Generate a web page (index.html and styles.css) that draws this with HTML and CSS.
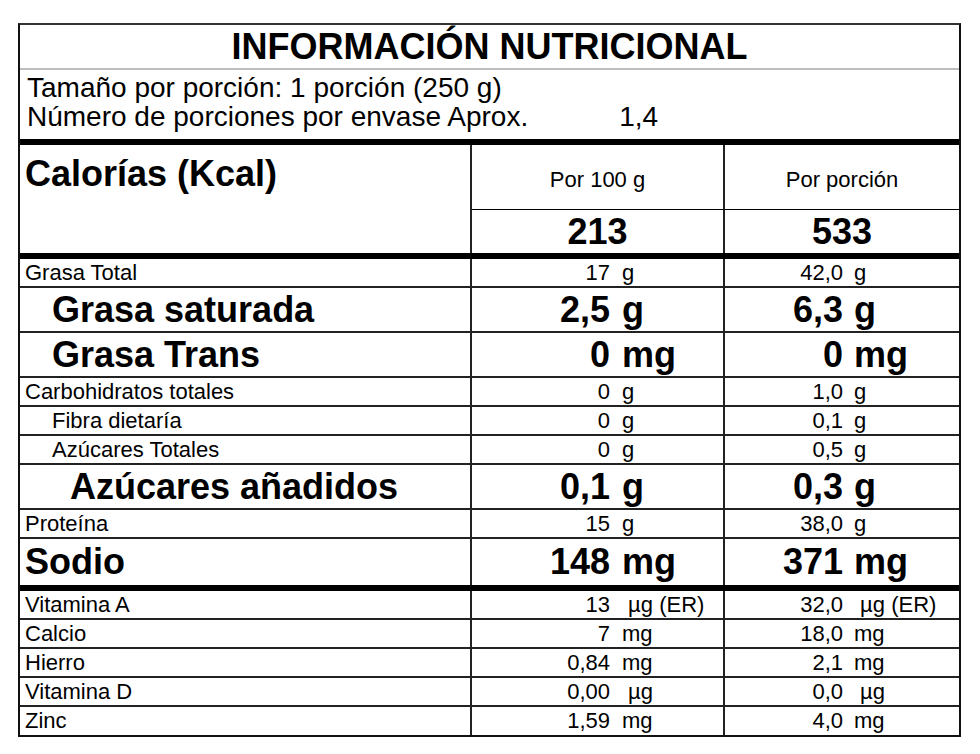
FILE: index.html
```html
<!DOCTYPE html>
<html lang="es">
<head>
<meta charset="utf-8">
<title>Información Nutricional</title>
<link rel="stylesheet" href="styles.css">
</head>
<body>
<div class="panel">
  <div class="title">INFORMACIÓN NUTRICIONAL</div>
  <div class="serving">
    <div>Tamaño por porción: 1 porción (250 g)</div>
    <div>Número de porciones por envase Aprox.<span class="count">1,4</span></div>
  </div>
  <div class="cal">
    <div class="cal-label">Calorías (Kcal)</div>
    <div class="cal-head c1">Por 100 g</div>
    <div class="cal-head">Por porción</div>
    <div class="cal-val c1">213</div>
    <div class="cal-val">533</div>
  </div>
  <div class="row"><div class="name">Grasa Total</div><div class="num">17</div><div class="unit">g</div><div class="num n2">42,0</div><div class="unit u2">g</div></div>
  <div class="row big"><div class="name ind">Grasa saturada</div><div class="num">2,5</div><div class="unit">g</div><div class="num n2">6,3</div><div class="unit u2">g</div></div>
  <div class="row big"><div class="name ind">Grasa Trans</div><div class="num">0</div><div class="unit">mg</div><div class="num n2">0</div><div class="unit u2">mg</div></div>
  <div class="row"><div class="name">Carbohidratos totales</div><div class="num">0</div><div class="unit">g</div><div class="num n2">1,0</div><div class="unit u2">g</div></div>
  <div class="row"><div class="name ind">Fibra dietaría</div><div class="num">0</div><div class="unit">g</div><div class="num n2">0,1</div><div class="unit u2">g</div></div>
  <div class="row"><div class="name ind">Azúcares Totales</div><div class="num">0</div><div class="unit">g</div><div class="num n2">0,5</div><div class="unit u2">g</div></div>
  <div class="row big"><div class="name ind2">Azúcares añadidos</div><div class="num">0,1</div><div class="unit">g</div><div class="num n2">0,3</div><div class="unit u2">g</div></div>
  <div class="row"><div class="name">Proteína</div><div class="num">15</div><div class="unit">g</div><div class="num n2">38,0</div><div class="unit u2">g</div></div>
  <div class="row big sodio"><div class="name">Sodio</div><div class="num">148</div><div class="unit">mg</div><div class="num n2">371</div><div class="unit u2">mg</div></div>
  <div class="row"><div class="name">Vitamina A</div><div class="num">13</div><div class="unit">&nbsp;µg (ER)</div><div class="num n2">32,0</div><div class="unit u2">&nbsp;µg (ER)</div></div>
  <div class="row"><div class="name">Calcio</div><div class="num">7</div><div class="unit">mg</div><div class="num n2">18,0</div><div class="unit u2">mg</div></div>
  <div class="row"><div class="name">Hierro</div><div class="num">0,84</div><div class="unit">mg</div><div class="num n2">2,1</div><div class="unit u2">mg</div></div>
  <div class="row"><div class="name">Vitamina D</div><div class="num">0,00</div><div class="unit">&nbsp;µg</div><div class="num n2">0,0</div><div class="unit u2">&nbsp;µg</div></div>
  <div class="row last"><div class="name">Zinc</div><div class="num">1,59</div><div class="unit">mg</div><div class="num n2">4,0</div><div class="unit u2">mg</div></div>
</div>
</body>
</html>
```

FILE: styles.css
```css
* {
  box-sizing: border-box;
  margin: 0;
  padding: 0;
}

body {
  margin: 0;
  background: #fff;
  color: #000;
  font-family: "Liberation Sans", Arial, sans-serif;
}

.panel {
  margin: 23px 0 0 18px;
  width: 943px;
  border: 2px solid #111;
  border-top-color: #333;
}

.title {
  height: 45px;
  border-bottom: 2px solid #bdbdbd;
  text-align: center;
  font-weight: bold;
  font-size: 36px;
  line-height: 43px;
}

.serving {
  padding: 3px 0 8px 7px;
  font-size: 28px;
  line-height: 29px;
  border-bottom: 6px solid #000;
}

.count {
  margin-left: 91px;
}

.cal {
  display: grid;
  grid-template-columns: 452px 253px 234px;
  grid-template-rows: 65px 43px;
  border-bottom: 6px solid #000;
}

.cal-label {
  grid-row: 1 / 3;
  border-right: 2px solid #222;
  font-weight: bold;
  font-size: 36px;
  padding: 8px 0 0 5px;
}

.cal-head {
  display: flex;
  align-items: center;
  justify-content: center;
  padding-top: 6px;
  font-size: 22px;
  border-bottom: 1px solid #000;
}

.c1 {
  border-right: 2px solid #222;
}

.cal-val {
  display: flex;
  align-items: center;
  justify-content: center;
  font-weight: bold;
  font-size: 36px;
}

.row {
  display: grid;
  grid-template-columns: 452px 144px 109px 123px 111px;
  height: 29px;
  border-bottom: 2px solid #222;
  font-size: 22px;
  line-height: 1;
}

.row > div {
  display: flex;
  align-items: center;
  white-space: pre;
}

.row .name {
  padding-left: 5px;
  border-right: 2px solid #222;
}

.row .name.ind {
  padding-left: 32px;
}

.row .name.ind2 {
  padding-left: 50px;
}

.row .num {
  justify-content: flex-end;
  padding-right: 6px;
}

.row .num.n2 {
  padding-right: 5px;
}

.row .unit {
  padding-left: 6px;
  border-right: 2px solid #222;
}

.row .unit.u2 {
  border-right: none;
}

.row.big {
  height: 45px;
  font-size: 36px;
  font-weight: bold;
}

.row.sodio {
  height: 52px;
  border-bottom: 6px solid #000;
}

.row.last {
  height: 28px;
  border-bottom: none;
}
```
